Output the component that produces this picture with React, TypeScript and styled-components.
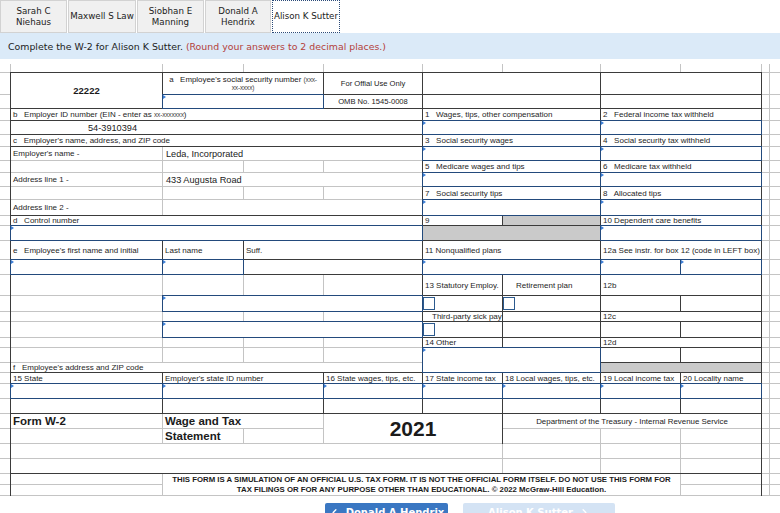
import React from 'react';
import styled, { createGlobalStyle, css } from 'styled-components';
import { ChevronLeft, ChevronRight } from 'lucide-react';

const COLS = [10, 151, 80, 79, 98, 79, 97, 79, 80, 7, 10];
const ROWS = [8, 21, 13, 11, 13, 11, 13, 11, 13, 12, 15, 9, 14, 18, 14, 20, 15, 9, 15, 9, 14, 9, 10, 14, 14, 14, 14, 14, 14, 10, 10];

const GRID_LINE = '#c4c4c4';
const DARK = '#3b3b3b';
const BLUE = '#234a7c';

const GlobalStyle = createGlobalStyle`
  html, body { margin: 0; padding: 0; background: #fff; }
  body { font-family: "Liberation Sans", Arial, sans-serif; color: #1b1b1b; overflow: hidden; }
`;

const Page = styled.div`
  width: 780px;
  display: flex;
  flex-direction: column;
`;

const TabBar = styled.div`
  display: flex;
  height: 33px;
  gap: 1px;
`;

const Tab = styled.div<{ $w: number; $active?: boolean }>`
  box-sizing: border-box;
  width: ${p => p.$w}px;
  display: flex;
  align-items: center;
  justify-content: center;
  text-align: center;
  font-family: "DejaVu Sans", Verdana, sans-serif;
  font-size: 8.7px;
  line-height: 11px;
  color: #222;
  background: #f0f0f0;
  border: 1px solid #d2d2d2;
  ${p => p.$active && css`
    background: #fff;
    border: 1px dotted #2b4a78;
  `}
`;

const Banner = styled.div`
  height: 26px;
  box-sizing: border-box;
  display: flex;
  align-items: center;
  padding-left: 8px;
  background: #dbeaf8;
  font-family: "DejaVu Sans", Verdana, sans-serif;
  font-size: 9.4px;
  color: #222;
  white-space: pre;
`;

const Hint = styled.span`
  color: #b43f3a;
`;

const FormGrid = styled.div`
  margin-top: 5px;
  display: grid;
  grid-template-columns: ${COLS.map(c => c + 'px').join(' ')};
  grid-template-rows: ${ROWS.map(r => r + 'px').join(' ')};
  gap: 1px;
  padding-bottom: 1px;
  background: ${GRID_LINE};
`;

type CellProps = { $c: number; $r: number; $cs: number; $rs: number; $sides?: string; $indent?: number };

const sideW = (s: string) => ['t', 'r', 'b', 'l'].map(k => (s.includes(k) ? '1px' : '0')).join(' ');

const Cell = styled.div<CellProps>`
  grid-column: ${p => p.$c + 1} / span ${p => p.$cs};
  grid-row: ${p => p.$r + 1} / span ${p => p.$rs};
  position: relative;
  min-width: 0;
  background: #fff;
  display: flex;
  align-items: center;
  white-space: pre;
  ${p => p.$sides && css`
    &::before {
      content: '';
      position: absolute;
      inset: -1px;
      border-style: solid;
      border-color: ${DARK};
      border-width: ${sideW(p.$sides)};
      pointer-events: none;
      z-index: 1;
    }
  `}
`;

const Label = styled(Cell)`
  font-size: 8px;
  padding-left: ${p => p.$indent ?? 2}px;
  color: #1e1e1e;
`;

const Value = styled(Cell)`
  font-size: 9.2px;
  padding-left: ${p => p.$indent ?? 3}px;
  color: #1a1a1a;
`;

const CodeBox = styled(Cell)`
  justify-content: center;
  font-weight: bold;
  font-size: 9.5px;
`;

const Note = styled(Cell)`
  justify-content: center;
  font-size: 7.6px;
`;

const Dept = styled(Cell)`
  justify-content: center;
  font-size: 7.9px;
`;

const SsnLabel = styled(Cell)`
  flex-direction: column;
  justify-content: center;
  text-align: center;
  font-size: 7.9px;
  line-height: 8px;
`;

const Small = styled.span`
  font-size: 6.6px;
  color: #444;
  letter-spacing: -0.2px;
`;

const Title = styled(Cell)`
  font-weight: bold;
  font-size: 11.5px;
  padding-left: 2px;
`;

const Year = styled(Cell)`
  justify-content: center;
  font-weight: bold;
  font-size: 21px;
`;

const Notice = styled(Cell)`
  justify-content: center;
  text-align: center;
  white-space: normal;
  font-weight: bold;
  font-size: 7.8px;
  line-height: 10px;
`;

const Gray = styled(Cell)`
  background: #cacaca;
`;

const Input = styled(Cell)`
  &::before {
    content: '';
    position: absolute;
    inset: -1px;
    border: 1px solid ${BLUE};
    pointer-events: none;
    z-index: 2;
  }
  &::after {
    content: '';
    position: absolute;
    left: 0;
    top: 0;
    border-left: 3px solid #3c7fd6;
    border-top: 2px solid transparent;
    border-bottom: 2px solid transparent;
  }
`;

const CheckCell = styled(Cell)``;

const Box = styled.span`
  width: 10px;
  height: 11px;
  border: 1px solid #2c5a8e;
  background: #fff;
`;

const Footer = styled.div`
  display: flex;
  gap: 15px;
  padding: 7px 0 0 325px;
`;

const NavButton = styled.button<{ $muted?: boolean; $w: number }>`
  width: ${p => p.$w}px;
  height: 30px;
  border: 0;
  border-radius: 2px;
  padding: 4px 0 0;
  display: flex;
  align-items: flex-start;
  justify-content: center;
  gap: 6px;
  font-family: "DejaVu Sans", Verdana, sans-serif;
  font-weight: bold;
  font-size: 10px;
  line-height: 12px;
  color: #fff;
  background: ${p => (p.$muted ? '#d4e3f4' : '#3a77c2')};
`;

type Kind = 'blank' | 'label' | 'value' | 'ein' | 'code' | 'note' | 'ssn' | 'title' | 'year' | 'dept' | 'notice' | 'gray' | 'input' | 'check';

interface Spec {
  c: number;
  r: number;
  cs?: number;
  rs?: number;
  kind?: Kind;
  text?: React.ReactNode;
  sides?: string;
  indent?: number;
}

const D = 'tblr';

const specs: Spec[] = [
  { c: 1, r: 1, rs: 2, kind: 'code', text: '22222', sides: D },
  {
    c: 2, r: 1, cs: 2, kind: 'ssn', sides: D,
    text: (
      <>
        <span>a   Employee's social security number <Small>(xxx-</Small></span>
        <span><Small>xx-xxxx)</Small></span>
      </>
    ),
  },
  { c: 4, r: 1, kind: 'note', text: 'For Offial Use Only', sides: D },
  { c: 5, r: 1, cs: 2, sides: D },
  { c: 7, r: 1, cs: 2, sides: D },
  { c: 2, r: 2, cs: 2, kind: 'input' },
  { c: 4, r: 2, kind: 'note', text: 'OMB No. 1545-0008', sides: D },
  { c: 5, r: 2, cs: 2, sides: D },
  { c: 7, r: 2, cs: 2, sides: D },

  { c: 1, r: 3, cs: 4, kind: 'label', sides: D, text: <>b   Employer ID number (EIN - enter as <Small>xx-xxxxxxx</Small>)</> },
  { c: 5, r: 3, cs: 2, kind: 'label', text: '1   Wages, tips, other compensation', sides: D },
  { c: 7, r: 3, cs: 2, kind: 'label', text: '2   Federal income tax withheld', sides: D },

  { c: 1, r: 4, cs: 4, kind: 'ein', text: '54-3910394', sides: D },
  { c: 5, r: 4, cs: 2, kind: 'input' },
  { c: 7, r: 4, cs: 2, kind: 'input' },

  { c: 1, r: 5, cs: 4, kind: 'label', text: "c   Employer's name, address, and ZIP code", sides: D },
  { c: 5, r: 5, cs: 2, kind: 'label', text: '3   Social security wages', sides: D },
  { c: 7, r: 5, cs: 2, kind: 'label', text: '4   Social security tax withheld', sides: D },

  { c: 1, r: 6, kind: 'label', text: "Employer's name -", sides: 'l' },
  { c: 2, r: 6, cs: 3, kind: 'value', text: 'Leda, Incorporated', sides: 'r' },
  { c: 5, r: 6, cs: 2, kind: 'input' },
  { c: 7, r: 6, cs: 2, kind: 'input' },

  { c: 1, r: 7, sides: 'l' },
  { c: 4, r: 7, sides: 'r' },
  { c: 5, r: 7, cs: 2, kind: 'label', text: '5   Medicare wages and tips', sides: D },
  { c: 7, r: 7, cs: 2, kind: 'label', text: '6   Medicare tax withheld', sides: D },

  { c: 1, r: 8, kind: 'label', text: 'Address line 1 -', sides: 'l' },
  { c: 2, r: 8, cs: 3, kind: 'value', text: '433 Augusta Road', sides: 'r' },
  { c: 5, r: 8, cs: 2, kind: 'input' },
  { c: 7, r: 8, cs: 2, kind: 'input' },

  { c: 1, r: 9, sides: 'l' },
  { c: 4, r: 9, sides: 'r' },
  { c: 5, r: 9, cs: 2, kind: 'label', text: '7   Social security tips', sides: D },
  { c: 7, r: 9, cs: 2, kind: 'label', text: '8   Allocated tips', sides: D },

  { c: 1, r: 10, kind: 'label', text: 'Address line 2 -', sides: 'l' },
  { c: 2, r: 10, cs: 3, sides: 'r' },
  { c: 5, r: 10, cs: 2, kind: 'input' },
  { c: 7, r: 10, cs: 2, kind: 'input' },

  { c: 1, r: 11, cs: 4, kind: 'label', text: 'd   Control number', sides: D },
  { c: 5, r: 11, kind: 'label', text: '9', sides: D },
  { c: 6, r: 11, kind: 'gray', sides: D },
  { c: 7, r: 11, cs: 2, kind: 'label', text: '10 Dependent care benefits', sides: D },

  { c: 1, r: 12, cs: 4, kind: 'input' },
  { c: 5, r: 12, cs: 2, kind: 'gray', sides: D },
  { c: 7, r: 12, cs: 2, kind: 'input' },

  { c: 1, r: 13, kind: 'label', text: "e   Employee's first name and initial", sides: D },
  { c: 2, r: 13, kind: 'label', text: 'Last name', sides: D },
  { c: 3, r: 13, cs: 2, kind: 'label', text: 'Suff.', sides: D },
  { c: 5, r: 13, cs: 2, kind: 'label', text: '11 Nonqualified plans', sides: D },
  { c: 7, r: 13, cs: 2, kind: 'label', text: '12a See instr. for box 12 (code in LEFT box)', sides: D },

  { c: 1, r: 14, kind: 'input' },
  { c: 2, r: 14, kind: 'input' },
  { c: 3, r: 14, cs: 2, sides: D },
  { c: 5, r: 14, cs: 2, kind: 'input' },
  { c: 7, r: 14, kind: 'input' },
  { c: 8, r: 14, kind: 'input' },

  { c: 1, r: 15, sides: 'l' },
  { c: 4, r: 15, sides: 'r' },
  { c: 5, r: 15, kind: 'label', text: '13 Statutory Employ.', sides: D },
  { c: 6, r: 15, kind: 'label', text: 'Retirement plan', indent: 13, sides: D },
  { c: 7, r: 15, cs: 2, kind: 'label', text: '12b', sides: D },

  { c: 1, r: 16, sides: 'l' },
  { c: 2, r: 16, cs: 3, kind: 'input' },
  { c: 5, r: 16, kind: 'check', sides: D },
  { c: 6, r: 16, kind: 'check', sides: D },
  { c: 7, r: 16, sides: D },
  { c: 8, r: 16, sides: D },

  { c: 1, r: 17, sides: 'l' },
  { c: 4, r: 17, sides: 'r' },
  { c: 5, r: 17, kind: 'label', text: 'Third-party sick pay', indent: 9, sides: D },
  { c: 6, r: 17, sides: D },
  { c: 7, r: 17, cs: 2, kind: 'label', text: '12c', sides: D },

  { c: 1, r: 18, sides: 'l' },
  { c: 2, r: 18, cs: 3, kind: 'input' },
  { c: 5, r: 18, kind: 'check', sides: D },
  { c: 6, r: 18, sides: D },
  { c: 7, r: 18, sides: D },
  { c: 8, r: 18, sides: D },

  { c: 1, r: 19, sides: 'l' },
  { c: 4, r: 19, sides: 'r' },
  { c: 5, r: 19, kind: 'label', text: '14 Other', sides: D },
  { c: 6, r: 19, sides: D },
  { c: 7, r: 19, cs: 2, kind: 'label', text: '12d', sides: D },

  { c: 1, r: 20, sides: 'l' },
  { c: 4, r: 20, sides: 'r' },
  { c: 5, r: 20, cs: 2, rs: 2, kind: 'input' },
  { c: 7, r: 20, sides: D },
  { c: 8, r: 20, sides: D },

  { c: 1, r: 21, cs: 4, kind: 'label', text: "f   Employee's address and ZIP code", sides: 'lrb' },
  { c: 7, r: 21, cs: 2, kind: 'gray', sides: D },

  { c: 1, r: 22, kind: 'label', text: '15 State', sides: D },
  { c: 2, r: 22, cs: 2, kind: 'label', text: "Employer's state ID number", sides: D },
  { c: 4, r: 22, kind: 'label', text: '16 State wages, tips, etc.', sides: D },
  { c: 5, r: 22, kind: 'label', text: '17 State income tax', sides: D },
  { c: 6, r: 22, kind: 'label', text: '18 Local wages, tips, etc.', sides: D },
  { c: 7, r: 22, kind: 'label', text: '19 Local income tax', sides: D },
  { c: 8, r: 22, kind: 'label', text: '20 Locality name', sides: D },

  { c: 1, r: 23, kind: 'input' },
  { c: 2, r: 23, cs: 2, kind: 'input' },
  { c: 4, r: 23, kind: 'input' },
  { c: 5, r: 23, kind: 'input' },
  { c: 6, r: 23, kind: 'input' },
  { c: 7, r: 23, kind: 'input' },
  { c: 8, r: 23, kind: 'input' },

  { c: 1, r: 24, sides: D },
  { c: 2, r: 24, cs: 2, sides: D },
  { c: 4, r: 24, sides: D },
  { c: 5, r: 24, sides: D },
  { c: 6, r: 24, sides: D },
  { c: 7, r: 24, sides: D },
  { c: 8, r: 24, sides: D },

  { c: 1, r: 25, kind: 'title', text: 'Form W-2', sides: 'lt' },
  { c: 2, r: 25, cs: 2, kind: 'title', text: 'Wage and Tax', sides: 't' },
  { c: 4, r: 25, cs: 2, rs: 2, kind: 'year', text: '2021', sides: 'tr' },
  { c: 6, r: 25, cs: 3, kind: 'dept', text: 'Department of the Treasury - Internal Revenue Service', sides: 'tr' },
  { c: 1, r: 26, sides: 'l' },
  { c: 2, r: 26, kind: 'title', text: 'Statement' },
  { c: 8, r: 26, sides: 'r' },

  { c: 1, r: 27, cs: 5, sides: 'l' },
  { c: 8, r: 27, sides: 'r' },
  { c: 1, r: 28, cs: 5, sides: 'l' },
  { c: 8, r: 28, sides: 'r' },

  { c: 1, r: 29, sides: 'lt' },
  { c: 1, r: 30, sides: 'l' },
  {
    c: 2, r: 29, cs: 6, rs: 2, kind: 'notice', sides: 't',
    text: (
      <>
        THIS FORM IS A SIMULATION OF AN OFFICIAL U.S. TAX FORM. IT IS NOT THE OFFICIAL FORM ITSELF. DO NOT USE THIS FORM FOR
        <br />
        TAX FILINGS OR FOR ANY PURPOSE OTHER THAN EDUCATIONAL. © 2022 McGraw-Hill Education.
      </>
    ),
  },
  { c: 8, r: 29, sides: 'tr' },
  { c: 8, r: 30, sides: 'r' },
];

const KIND_MAP: Record<Kind, typeof Cell> = {
  blank: Cell,
  label: Label,
  value: Value,
  ein: Value,
  code: CodeBox,
  note: Note,
  ssn: SsnLabel,
  title: Title,
  year: Year,
  dept: Dept,
  notice: Notice,
  gray: Gray,
  input: Input,
  check: CheckCell,
};

function buildCells() {
  const taken: boolean[][] = ROWS.map(() => COLS.map(() => false));
  const out: React.ReactNode[] = [];
  specs.forEach((s, i) => {
    const cs = s.cs ?? 1;
    const rs = s.rs ?? 1;
    for (let r = s.r; r < s.r + rs; r++) for (let c = s.c; c < s.c + cs; c++) taken[r][c] = true;
    const kind = s.kind ?? 'blank';
    const Comp = KIND_MAP[kind];
    const indent = kind === 'ein' ? 77 : s.indent;
    out.push(
      <Comp key={'s' + i} $c={s.c} $r={s.r} $cs={cs} $rs={rs} $sides={s.sides} $indent={indent}>
        {kind === 'check' ? <Box /> : s.text}
      </Comp>
    );
  });
  ROWS.forEach((_, r) =>
    COLS.forEach((__, c) => {
      if (!taken[r][c]) out.push(<Cell key={`f${r}-${c}`} $c={c} $r={r} $cs={1} $rs={1} />);
    })
  );
  return out;
}

const tabs = [
  { w: 67, label: 'Sarah C\nNiehaus' },
  { w: 68, label: 'Maxwell S Law' },
  { w: 67, label: 'Siobhan E\nManning' },
  { w: 66, label: 'Donald A\nHendrix' },
  { w: 68, label: 'Alison K Sutter', active: true },
];

const TabText = styled.span`
  white-space: pre;
`;

export default function App() {
  return (
    <Page>
      <GlobalStyle />
      <TabBar>
        {tabs.map(t => (
          <Tab key={t.label} $w={t.w} $active={t.active}>
            <TabText>{t.label}</TabText>
          </Tab>
        ))}
      </TabBar>
      <Banner>
        Complete the W-2 for Alison K Sutter. <Hint>(Round your answers to 2 decimal places.)</Hint>
      </Banner>
      <FormGrid>{buildCells()}</FormGrid>
      <Footer>
        <NavButton $w={123}>
          <ChevronLeft size={11} strokeWidth={3} />
          Donald A Hendrix
        </NavButton>
        <NavButton $w={152} $muted>
          Alison K Sutter
          <ChevronRight size={11} strokeWidth={3} />
        </NavButton>
      </Footer>
    </Page>
  );
}
